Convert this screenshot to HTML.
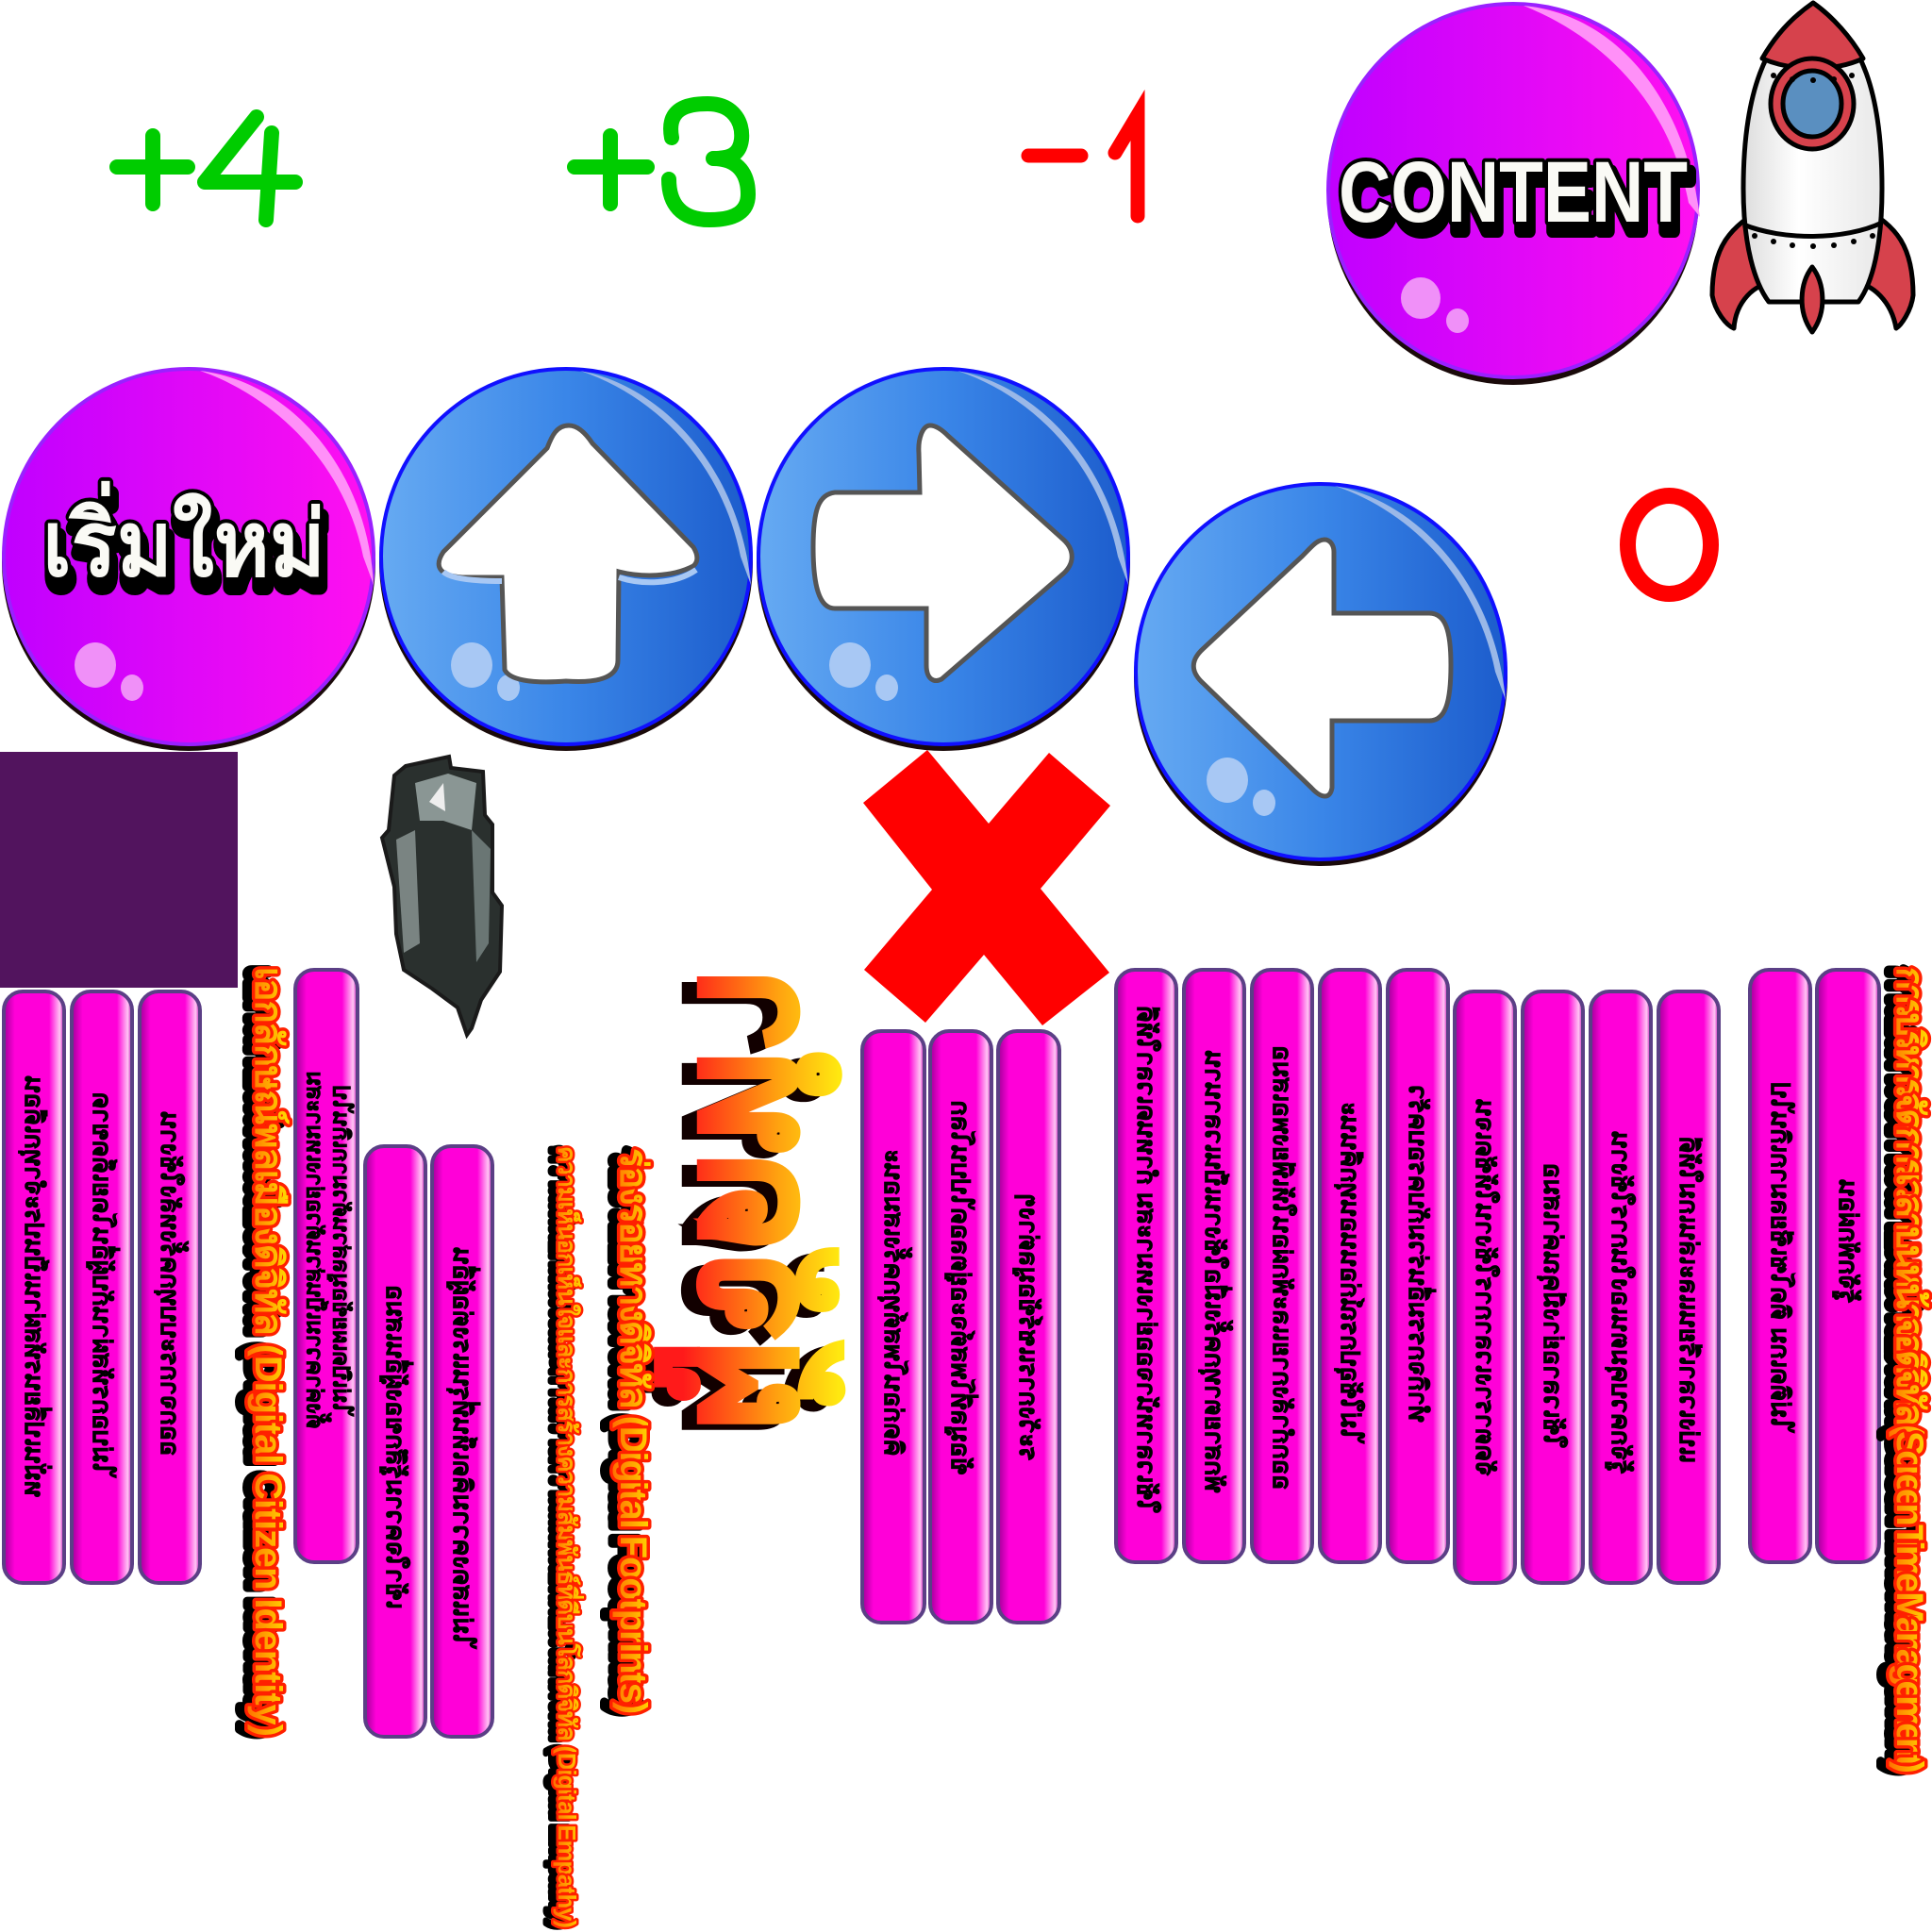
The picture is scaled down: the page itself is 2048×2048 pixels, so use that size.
<!DOCTYPE html>
<html><head><meta charset="utf-8"><style>
html,body{margin:0;padding:0;background:#fff;width:2048px;height:2048px;overflow:hidden}
svg{display:block}
.pt{font-family:"Liberation Sans","DejaVu Sans",sans-serif;font-weight:bold;font-size:27px;fill:#000;stroke:#000;stroke-width:0.8}
.tt{font-family:"Liberation Sans","DejaVu Sans",sans-serif;font-weight:bold;font-size:40px}
</style></head><body>
<svg width="2048" height="2048" viewBox="0 0 2048 2048" xmlns="http://www.w3.org/2000/svg">
<defs>
<linearGradient id="pg" x1="0" x2="1" y1="0" y2="0"><stop offset="0" stop-color="#c000ff"/><stop offset="1" stop-color="#ff10f0"/></linearGradient>
<linearGradient id="bg" x1="0" x2="1" y1="0" y2="0"><stop offset="0" stop-color="#66aaf2"/><stop offset="0.5" stop-color="#3a86e8"/><stop offset="1" stop-color="#1c5ccc"/></linearGradient>
<linearGradient id="pill" x1="0" x2="1" y1="0" y2="0"><stop offset="0" stop-color="#a00098"/><stop offset="0.18" stop-color="#ff00d8"/><stop offset="0.75" stop-color="#ff00d8"/><stop offset="0.93" stop-color="#ffc6f4"/><stop offset="1" stop-color="#c000b0"/></linearGradient>
<linearGradient id="tg" gradientUnits="userSpaceOnUse" x1="0" y1="80" x2="0" y2="-85"><stop offset="0" stop-color="#ff1a1a"/><stop offset="0.6" stop-color="#ffa010"/><stop offset="1" stop-color="#ffe810"/></linearGradient>
<linearGradient id="og" x1="0" x2="0" y1="0" y2="1"><stop offset="0" stop-color="#ffe000"/><stop offset="1" stop-color="#ff7000"/></linearGradient>
<linearGradient id="rk" x1="0" x2="1"><stop offset="0" stop-color="#ddd"/><stop offset="0.4" stop-color="#fff"/><stop offset="1" stop-color="#e8e8e8"/></linearGradient>
</defs>

<g fill="none" stroke="#00cc00" stroke-width="16" stroke-linecap="round" stroke-linejoin="round">
<path d="M162 144V216M124 177H199"/>
<path d="M272 124L217 193H313M288 141L282 233"/>
<path d="M647 144V216M609 177H686"/>
<path d="M712 146C706 114 730 110 750 110C776 110 788 128 786 148C784 164 774 168 756 168C784 168 793 186 793 206C793 224 780 233 752 233C722 233 709 216 709 190"/>
</g>
<g fill="none" stroke="#ff0000" stroke-width="15" stroke-linecap="round">
<path d="M1090 165H1146M1182 162L1206 122V229"/>
</g>
<ellipse cx="1769.5" cy="577.5" rx="44" ry="52" fill="none" stroke="#ff0000" stroke-width="17"/>

<ellipse cx="1604" cy="208" rx="197" ry="200" fill="#1a0a0a"/>
<ellipse cx="1604" cy="202" rx="196" ry="198" fill="url(#pg)" stroke="#9a20ff" stroke-width="4"/>
<path d="M1615 6C1710 15 1785 100 1802 230L1790 215C1770 110 1700 40 1615 6Z" fill="#ff90f8"/>
<ellipse cx="1506" cy="316" rx="21" ry="22" fill="#f090f8"/>
<ellipse cx="1545" cy="340" rx="12" ry="13" fill="#f090f8"/>
<text x="1604" y="235" text-anchor="middle" font-family="Liberation Sans,sans-serif" font-weight="bold" font-size="92" textLength="370" lengthAdjust="spacingAndGlyphs" fill="#000" stroke="#000" stroke-width="14" stroke-linejoin="round" transform="translate(4,10)">CONTENT</text>
<text x="1604" y="235" text-anchor="middle" font-family="Liberation Sans,sans-serif" font-weight="bold" font-size="92" textLength="370" lengthAdjust="spacingAndGlyphs" fill="#fafaf5" stroke="#000" stroke-width="8" stroke-linejoin="round" paint-order="stroke">CONTENT</text>

<g stroke="#000" stroke-width="5" stroke-linejoin="round">
<path d="M1815 313C1815 260 1835 240 1870 220L1880 300C1860 300 1840 320 1838 348C1830 345 1818 330 1815 313Z" fill="#d6424c"/>
<path d="M2028 313C2028 260 2010 240 1975 220L1965 300C1985 300 2005 320 2010 348C2015 345 2026 330 2028 313Z" fill="#d6424c"/>
<path d="M1922 3C1870 40 1848 100 1848 200C1848 260 1860 300 1875 320H1970C1985 300 1995 260 1995 200C1995 100 1975 40 1922 3Z" fill="url(#rk)"/>
<path d="M1922 3C1890 25 1875 50 1868 62C1900 76 1945 76 1975 62C1968 50 1952 25 1922 3Z" fill="#d6424c"/>
<ellipse cx="1921" cy="110" rx="44" ry="48" fill="#d6424c"/>
<ellipse cx="1921" cy="110" rx="31" ry="35" fill="#5a8fc0"/>
<path d="M1848 238C1890 255 1955 255 1995 236" fill="none"/>
<path d="M1921 283C1908 300 1905 330 1921 352C1937 330 1934 300 1921 283Z" fill="#d6424c"/>
</g>
<g fill="#000"><circle cx="1880" cy="80" r="3"/><circle cx="1900" cy="84" r="3"/><circle cx="1922" cy="85" r="3"/><circle cx="1944" cy="84" r="3"/><circle cx="1963" cy="80" r="3"/>
<circle cx="1860" cy="250" r="3"/><circle cx="1880" cy="256" r="3"/><circle cx="1900" cy="260" r="3"/><circle cx="1922" cy="261" r="3"/><circle cx="1944" cy="260" r="3"/><circle cx="1965" cy="256" r="3"/><circle cx="1985" cy="250" r="3"/></g>

<ellipse cx="200" cy="596" rx="198" ry="200" fill="#1a0a0a"/>
<ellipse cx="200" cy="590" rx="196" ry="199" fill="url(#pg)" stroke="#9a20ff" stroke-width="4"/>
<path d="M212 393C310 405 390 500 396 620L385 590C365 490 290 420 212 393Z" fill="#ff90f8"/>
<ellipse cx="101" cy="705" rx="22" ry="24" fill="#f090f8"/>
<ellipse cx="140" cy="729" rx="12" ry="14" fill="#f090f8"/>
<text x="195" y="610" text-anchor="middle" font-family="Liberation Sans,'DejaVu Sans',sans-serif" font-weight="bold" font-size="96" textLength="300" lengthAdjust="spacingAndGlyphs" fill="#000" stroke="#000" stroke-width="14" stroke-linejoin="round" transform="translate(3,12)">เริ่มใหม่</text>
<text x="195" y="610" text-anchor="middle" font-family="Liberation Sans,'DejaVu Sans',sans-serif" font-weight="bold" font-size="96" textLength="300" lengthAdjust="spacingAndGlyphs" fill="#fafaf5" stroke="#000" stroke-width="8" stroke-linejoin="round" paint-order="stroke">เริ่มใหม่</text>

<ellipse cx="600" cy="596" rx="198" ry="200" fill="#1a0a0a"/>
<ellipse cx="600" cy="590" rx="196" ry="199" fill="url(#bg)" stroke="#1010ff" stroke-width="4"/>
<path d="M615 393C705 410 785 500 796 620L785 590C765 490 695 420 615 393Z" fill="#9ab8e8"/>
<ellipse cx="500" cy="705" rx="22" ry="24" fill="#a8c8f4"/>
<ellipse cx="539" cy="729" rx="12" ry="14" fill="#a8c8f4"/>
<path d="M603 451C590 451 585 462 580 475L470 585C460 600 465 610 490 612H532L535 710C540 720 560 725 600 722C640 725 655 715 655 700L656 606C680 612 712 612 735 600C742 594 738 585 735 580L628 470C620 458 612 451 603 451Z" fill="#fff" stroke="#555" stroke-width="5"/>
<path d="M470 606C480 616 520 616 532 616M656 612C680 620 715 620 738 604" fill="none" stroke="#a8c8f4" stroke-width="6"/>

<ellipse cx="1000" cy="596" rx="198" ry="200" fill="#1a0a0a"/>
<ellipse cx="1000" cy="590" rx="196" ry="199" fill="url(#bg)" stroke="#1010ff" stroke-width="4"/>
<path d="M1015 393C1105 410 1185 500 1196 620L1185 590C1165 490 1095 420 1015 393Z" fill="#9ab8e8"/>
<ellipse cx="901" cy="705" rx="22" ry="24" fill="#a8c8f4"/>
<ellipse cx="940" cy="729" rx="12" ry="14" fill="#a8c8f4"/>
<path d="M986 451C978 451 973 465 974 480L975 522H885C868 524 862 540 862 580C862 620 868 645 885 645H982V705C982 720 990 724 998 720L1125 610C1140 598 1140 582 1125 570L1005 462C998 455 992 451 986 451Z" fill="#fff" stroke="#555" stroke-width="5"/>

<ellipse cx="1400" cy="718" rx="198" ry="200" fill="#1a0a0a"/>
<ellipse cx="1400" cy="712" rx="196" ry="199" fill="url(#bg)" stroke="#1010ff" stroke-width="4"/>
<path d="M1415 515C1505 532 1585 622 1596 742L1585 712C1565 612 1495 542 1415 515Z" fill="#9ab8e8"/>
<ellipse cx="1301" cy="827" rx="22" ry="24" fill="#a8c8f4"/>
<ellipse cx="1340" cy="851" rx="12" ry="14" fill="#a8c8f4"/>
<path d="M1404 572C1396 572 1390 580 1380 590L1275 688C1262 700 1262 712 1275 724L1390 835C1400 846 1410 848 1412 835V764H1515C1532 764 1538 745 1538 705C1538 668 1532 650 1515 650H1414V585C1414 578 1410 572 1404 572Z" fill="#fff" stroke="#555" stroke-width="5"/>

<rect x="0" y="797" width="252" height="250" fill="#52145e"/>

<path d="M418 822L430 812L476 802L478 814L512 818L514 864L522 874L522 946L532 960L530 1030L510 1060L500 1090L495 1097L485 1068L458 1048L428 1028L420 990L418 940L405 888L412 880Z" fill="#2a302e" stroke="#1a1a1a" stroke-width="4"/>
<path d="M440 830L475 820L505 830L500 880L470 870L445 870Z" fill="#8a9694"/>
<path d="M420 890L440 880L445 1000L428 1010Z" fill="#7a8482"/>
<path d="M500 880L520 900L518 1000L505 1020Z" fill="#6a7674"/>
<path d="M455 850L470 830L472 860Z" fill="#eee"/>

<polygon points="983,795 915,851 988,943 916,1028 981,1084 1043,1012 1105,1087 1176,1031 1103,942 1177,854 1112,798 1048,873" fill="#ff0000"/>

<g font-family="Liberation Sans,'DejaVu Sans',sans-serif" font-weight="bold" font-size="175">
<text transform="matrix(0,-1,-1,0,796,1270)" text-anchor="middle" dominant-baseline="central" textLength="490" lengthAdjust="spacingAndGlyphs" fill="#120000" stroke="#120000" stroke-width="6" dy="8" dx="-6">ผู้จัดทำ</text>
<text transform="matrix(0,-1,-1,0,804,1270)" text-anchor="middle" dominant-baseline="central" textLength="490" lengthAdjust="spacingAndGlyphs" fill="url(#tg)" stroke="url(#tg)" stroke-width="6">ผู้จัดทำ</text>
</g>

<g stroke="#5b3f86" stroke-width="4" fill="url(#pill)">
<rect x="4" y="1051" width="64" height="627" rx="20"/>
<rect x="76" y="1051" width="64" height="627" rx="20"/>
<rect x="148" y="1051" width="64" height="627" rx="20"/>
<rect x="313" y="1028" width="66" height="628" rx="20"/>
<rect x="387" y="1215" width="64" height="626" rx="20"/>
<rect x="458" y="1215" width="64" height="626" rx="20"/>
<rect x="914" y="1093" width="66" height="627" rx="20"/>
<rect x="986" y="1093" width="65" height="627" rx="20"/>
<rect x="1058" y="1093" width="65" height="627" rx="20"/>
<rect x="1183" y="1028" width="64" height="628" rx="20"/>
<rect x="1255" y="1028" width="64" height="628" rx="20"/>
<rect x="1327" y="1028" width="64" height="628" rx="20"/>
<rect x="1399" y="1028" width="64" height="628" rx="20"/>
<rect x="1471" y="1028" width="64" height="628" rx="20"/>
<rect x="1542" y="1051" width="64" height="627" rx="20"/>
<rect x="1614" y="1051" width="64" height="627" rx="20"/>
<rect x="1686" y="1051" width="64" height="627" rx="20"/>
<rect x="1758" y="1051" width="64" height="627" rx="20"/>
<rect x="1855" y="1028" width="64" height="628" rx="20"/>
<rect x="1926" y="1028" width="66" height="628" rx="20"/>
</g>

<g class="pt" text-anchor="middle" dominant-baseline="central">
<text transform="matrix(0,-1,-1,0,36,1364)">หมั่นเปลี่ยนรหัสผ่านเป็นประจำทุกเดือน</text>
<text transform="matrix(0,-1,-1,0,108,1361)">ไม่บอกรหัสผ่านกับผู้อื่นโดยเด็ดขาด</text>
<text transform="matrix(0,-1,-1,0,180,1361)">ออกจากระบบทุกครั้งหลังใช้งาน</text>
<text transform="matrix(0,-1,-1,0,333,1325)" style="font-size:24px">ตั้งค่าความเป็นส่วนตัวอย่างเหมาะสม</text>
<text transform="matrix(0,-1,-1,0,361,1325)" style="font-size:24px">ไม่เปิดเผยข้อมูลส่วนตัวมากเกินไป</text>
<text transform="matrix(0,-1,-1,0,419,1534)">เข้าใจความรู้สึกของผู้อื่นเสมอ</text>
<text transform="matrix(0,-1,-1,0,490,1534)">ไม่แสดงความคิดเห็นที่รุนแรงต่อผู้อื่น</text>
<text transform="matrix(0,-1,-1,0,947,1381)">คิดก่อนโพสต์ทุกครั้งเสมอนะ</text>
<text transform="matrix(0,-1,-1,0,1018,1365)">ข้อมูลที่โพสต์จะอยู่ตลอดไปบนโลก</text>
<text transform="matrix(0,-1,-1,0,1090,1407)">ระวังการแชร์ข้อมูลต่างๆ</text>
<text transform="matrix(0,-1,-1,0,1215,1335)">ใช้เวลาหน้าจออย่างเหมาะสม กำหนดเวลาให้ดี</text>
<text transform="matrix(0,-1,-1,0,1287,1348)">พักสายตาทุกครั้งเมื่อใช้งานเป็นเวลานาน</text>
<text transform="matrix(0,-1,-1,0,1359,1344)">ออกกำลังกายและพักผ่อนให้เพียงพอเสมอ</text>
<text transform="matrix(0,-1,-1,0,1431,1348)">ไม่ใช้อุปกรณ์ก่อนนอนทุกคืนนะ</text>
<text transform="matrix(0,-1,-1,0,1503,1329)">ทำกิจกรรมอื่นร่วมกับครอบครัว</text>
<text transform="matrix(0,-1,-1,0,1574,1365)">จัดตารางเวลาการใช้งานให้ชัดเจน</text>
<text transform="matrix(0,-1,-1,0,1646,1384)">ใช้เวลาอย่างมีคุณค่าเสมอ</text>
<text transform="matrix(0,-1,-1,0,1718,1381)">รู้จักควบคุมตนเองในการใช้งาน</text>
<text transform="matrix(0,-1,-1,0,1790,1378)">แบ่งเวลาเรียนและเล่นเกมให้ดี</text>
<text transform="matrix(0,-1,-1,0,1887,1332)">ไม่ติดเกม ติดโซเชียลมากเกินไป</text>
<text transform="matrix(0,-1,-1,0,1959,1316)">รู้จักพักผ่อน</text>
</g>

<g class="tt" dominant-baseline="central" lengthAdjust="spacingAndGlyphs">
<text transform="translate(281,1025) rotate(90)" textLength="816" fill="#000" stroke="#000" stroke-width="9" stroke-linejoin="round" dy="6">เอกลักษณ์พลเมืองดิจิทัล (Digital Citizen Identity)</text>
<text transform="translate(284,1025) rotate(90)" textLength="816" fill="url(#og)" stroke="#ff2000" stroke-width="7" stroke-linejoin="round" paint-order="stroke">เอกลักษณ์พลเมืองดิจิทัล (Digital Citizen Identity)</text>
<text transform="translate(668,1215) rotate(90)" textLength="600" fill="#000" stroke="#000" stroke-width="9" stroke-linejoin="round" dy="6">ร่องรอยทางดิจิทัล (Digital Footprints)</text>
<text transform="translate(671,1215) rotate(90)" textLength="600" fill="url(#og)" stroke="#ff2000" stroke-width="7" stroke-linejoin="round" paint-order="stroke">ร่องรอยทางดิจิทัล (Digital Footprints)</text>
<text transform="translate(2021,1025) rotate(90)" textLength="855" fill="#000" stroke="#000" stroke-width="9" stroke-linejoin="round" dy="6">การบริหารจัดการเวลาบนหน้าจอดิจิทัล (Screen Time Management)</text>
<text transform="translate(2024,1025) rotate(90)" textLength="855" fill="url(#og)" stroke="#ff2000" stroke-width="7" stroke-linejoin="round" paint-order="stroke">การบริหารจัดการเวลาบนหน้าจอดิจิทัล (Screen Time Management)</text>
</g>
<g font-family="Liberation Sans,'DejaVu Sans',sans-serif" font-weight="bold" font-size="26" dominant-baseline="central" lengthAdjust="spacingAndGlyphs">
<text transform="translate(598,1215) rotate(90)" textLength="829" fill="#000" stroke="#000" stroke-width="6" stroke-linejoin="round" dy="5">ความเห็นอกเห็นใจและการสร้างความสัมพันธ์ที่ดีบนโลกดิจิทัล (Digital Empathy)</text>
<text transform="translate(601,1215) rotate(90)" textLength="829" fill="url(#og)" stroke="#ff2000" stroke-width="5" stroke-linejoin="round" paint-order="stroke">ความเห็นอกเห็นใจและการสร้างความสัมพันธ์ที่ดีบนโลกดิจิทัล (Digital Empathy)</text>
</g>
</svg>
</body></html>
